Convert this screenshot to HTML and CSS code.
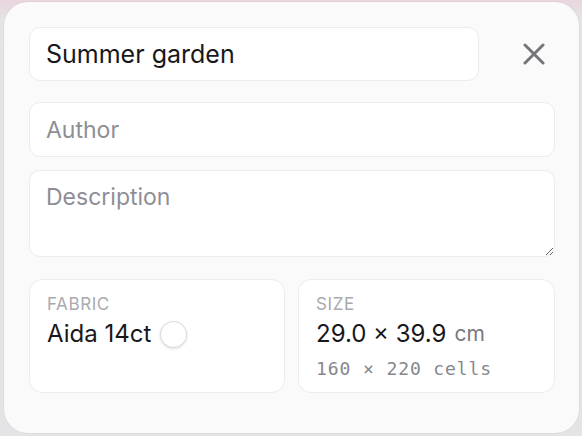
FILE: index.html
```html
<!DOCTYPE html>
<html lang="en">
<head>
  <meta charset="UTF-8" />
  <meta name="viewport" content="width=device-width, initial-scale=1" />
  <title>Edit pattern</title>
  <link rel="stylesheet" href="styles.css">
</head>
<body>

  <div class="dialog">
    <div class="title-row">
      <input class="field title-input" type="text" value="Summer garden" />
      <button class="close" aria-label="Close">
        <svg width="22" height="22" viewBox="0 0 22 22">
          <path d="M2 2 L20 20 M20 2 L2 20" stroke="#74747c" stroke-width="3" stroke-linecap="round" fill="none"/>
        </svg>
      </button>
    </div>

    <input class="field author" type="text" placeholder="Author" />
    <textarea class="field desc" placeholder="Description"></textarea>

    <div class="cards">
      <div class="card">
        <div class="card-label">Fabric</div>
        <div class="card-value">
          Aida 14ct
          <span class="swatch"></span>
        </div>
      </div>
      <div class="card">
        <div class="card-label">Size</div>
        <div class="card-value">29.0 × 39.9 <span class="unit">cm</span></div>
        <div class="cells">160 × 220 cells</div>
      </div>
    </div>
  </div>

</body>
</html>
```

FILE: styles.css
```css
html, body {
  margin: 0;
  height: 100%;
}
body {
  background: linear-gradient(#e9d5dd 0px, #e6e3e6 20px, #e4e4e7 60px);
  font-family: Inter, 'Noto Sans', sans-serif;
  color: #18181b;
  overflow: hidden;
}
.dialog {
  box-sizing: border-box;
  width: 575px;
  height: 431px;
  margin: 2px 0 0 4px;
  padding: 25px 24px 0 25px;
  background: #fafafa;
  border-radius: 24px;
  box-shadow: 0 0 0 1px rgba(0, 0, 0, 0.03);
}
.field {
  box-sizing: border-box;
  display: block;
  width: 100%;
  background: #fff;
  border: 1px solid #ececee;
  border-radius: 11px;
  font-family: Inter, 'Noto Sans', sans-serif;
  color: #18181b;
  outline: none;
}
.field::placeholder {
  color: #8e8e96;
}
.title-row {
  display: flex;
  align-items: center;
  gap: 32px;
  margin-bottom: 21px;
}
.title-input {
  flex: 1;
  height: 54px;
  padding: 0 16px;
  font-size: 25px;
}
.close {
  width: 44px;
  height: 44px;
  padding: 0 0 0 2px;
  border: none;
  background: none;
  display: flex;
  align-items: center;
  justify-content: center;
  cursor: pointer;
}
.author {
  height: 55px;
  padding: 0 16px;
  font-size: 23px;
  margin-bottom: 13px;
}
.desc {
  height: 87px;
  padding: 12px 16px;
  font-size: 23px;
  resize: vertical;
  margin-bottom: 22px;
}
.cards {
  display: grid;
  grid-template-columns: 256px 1fr;
  gap: 13px;
}
.card {
  box-sizing: border-box;
  height: 114px;
  padding: 13px 17px;
  background: #fff;
  border: 1px solid #ececee;
  border-radius: 13px;
}
.card-label {
  font-size: 17px;
  letter-spacing: 0.6px;
  text-transform: uppercase;
  color: #a9a9b0;
  line-height: 22px;
}
.card-value {
  display: flex;
  align-items: center;
  font-size: 24px;
  line-height: 32px;
  margin-top: 3px;
}
.swatch {
  display: inline-block;
  width: 25px;
  height: 25px;
  margin-left: 9px;
  border-radius: 50%;
  background: #fff;
  border: 1px solid #d9d9dc;
  box-shadow: 0 1px 3px rgba(0, 0, 0, 0.12);
}
.unit {
  margin-left: 8px;
  font-size: 21px;
  color: #78787f;
}
.cells {
  font-family: 'DejaVu Sans Mono', monospace;
  font-size: 18px;
  letter-spacing: 0.9px;
  color: #86868c;
  margin-top: 8px;
}
```
